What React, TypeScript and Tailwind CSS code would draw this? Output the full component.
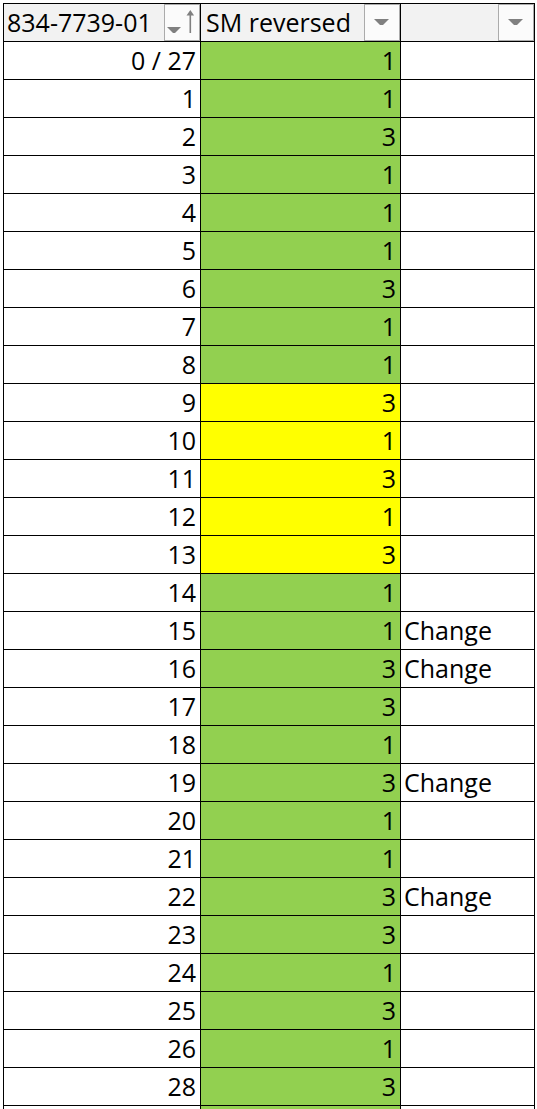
import React from 'react';

type Row = { id: string; sm: number; fill: 'green' | 'yellow'; note?: string };

const rows: Row[] = [
  { id: '0 / 27', sm: 1, fill: 'green' },
  { id: '1', sm: 1, fill: 'green' },
  { id: '2', sm: 3, fill: 'green' },
  { id: '3', sm: 1, fill: 'green' },
  { id: '4', sm: 1, fill: 'green' },
  { id: '5', sm: 1, fill: 'green' },
  { id: '6', sm: 3, fill: 'green' },
  { id: '7', sm: 1, fill: 'green' },
  { id: '8', sm: 1, fill: 'green' },
  { id: '9', sm: 3, fill: 'yellow' },
  { id: '10', sm: 1, fill: 'yellow' },
  { id: '11', sm: 3, fill: 'yellow' },
  { id: '12', sm: 1, fill: 'yellow' },
  { id: '13', sm: 3, fill: 'yellow' },
  { id: '14', sm: 1, fill: 'green' },
  { id: '15', sm: 1, fill: 'green', note: 'Change' },
  { id: '16', sm: 3, fill: 'green', note: 'Change' },
  { id: '17', sm: 3, fill: 'green' },
  { id: '18', sm: 1, fill: 'green' },
  { id: '19', sm: 3, fill: 'green', note: 'Change' },
  { id: '20', sm: 1, fill: 'green' },
  { id: '21', sm: 1, fill: 'green' },
  { id: '22', sm: 3, fill: 'green', note: 'Change' },
  { id: '23', sm: 3, fill: 'green' },
  { id: '24', sm: 1, fill: 'green' },
  { id: '25', sm: 3, fill: 'green' },
  { id: '26', sm: 1, fill: 'green' },
  { id: '28', sm: 3, fill: 'green' },
];

const cell = 'h-[38px] border-r border-b border-black flex items-center leading-none';

function FilterButton({ sorted }: { sorted?: boolean }) {
  return (
    <div className="h-[37px] w-[36px] shrink-0 border border-[#ababab] bg-[#fbfbfb] relative">
      {sorted ? (
        <svg width="34" height="35" viewBox="0 0 34 35" className="absolute left-0 top-0">
          <polygon points="2,22 16,22 10,28 8,28" fill="#808080" />
          <rect x="24.5" y="9" width="1.6" height="19" fill="#808080" />
          <polygon points="25.3,5 21.5,10.5 29.1,10.5" fill="#808080" />
        </svg>
      ) : (
        <svg width="34" height="35" viewBox="0 0 34 35" className="absolute left-0 top-0">
          <polygon points="9,14 24,14 18,20 15,20" fill="#808080" />
        </svg>
      )}
    </div>
  );
}

export default function App() {
  return (
    <div className="w-[537px] h-[1109px] overflow-hidden bg-white pl-[3px] pt-[3px] font-['Open_Sans',sans-serif] text-[25px] text-black">
      <div className="grid grid-cols-[197px_200px_134px] border-l border-t border-black w-[532px]">
        {/* header */}
        <div className={`${cell} bg-[#f2f2f2] justify-between pl-[3px]`}>
          <span>834-7739-01</span>
          <FilterButton sorted />
        </div>
        <div className={`${cell} bg-[#f2f2f2] justify-between pl-[5px]`}>
          <span>SM reversed</span>
          <FilterButton />
        </div>
        <div className={`${cell} bg-[#f2f2f2] justify-end`}>
          <FilterButton />
        </div>

        {rows.map((r) => (
          <React.Fragment key={r.id}>
            <div className={`${cell} justify-end pr-[4px]`}>{r.id}</div>
            <div
              className={`${cell} justify-end pr-[4px] ${
                r.fill === 'yellow' ? 'bg-[#ffff00]' : 'bg-[#92d050]'
              }`}
            >
              {r.sm}
            </div>
            <div className={`${cell} pl-[3px]`}>{r.note ?? ''}</div>
          </React.Fragment>
        ))}

        {/* partly visible next row */}
        <div className={`${cell}`}></div>
        <div className={`${cell} bg-[#92d050]`}></div>
        <div className={`${cell}`}></div>
      </div>
    </div>
  );
}
